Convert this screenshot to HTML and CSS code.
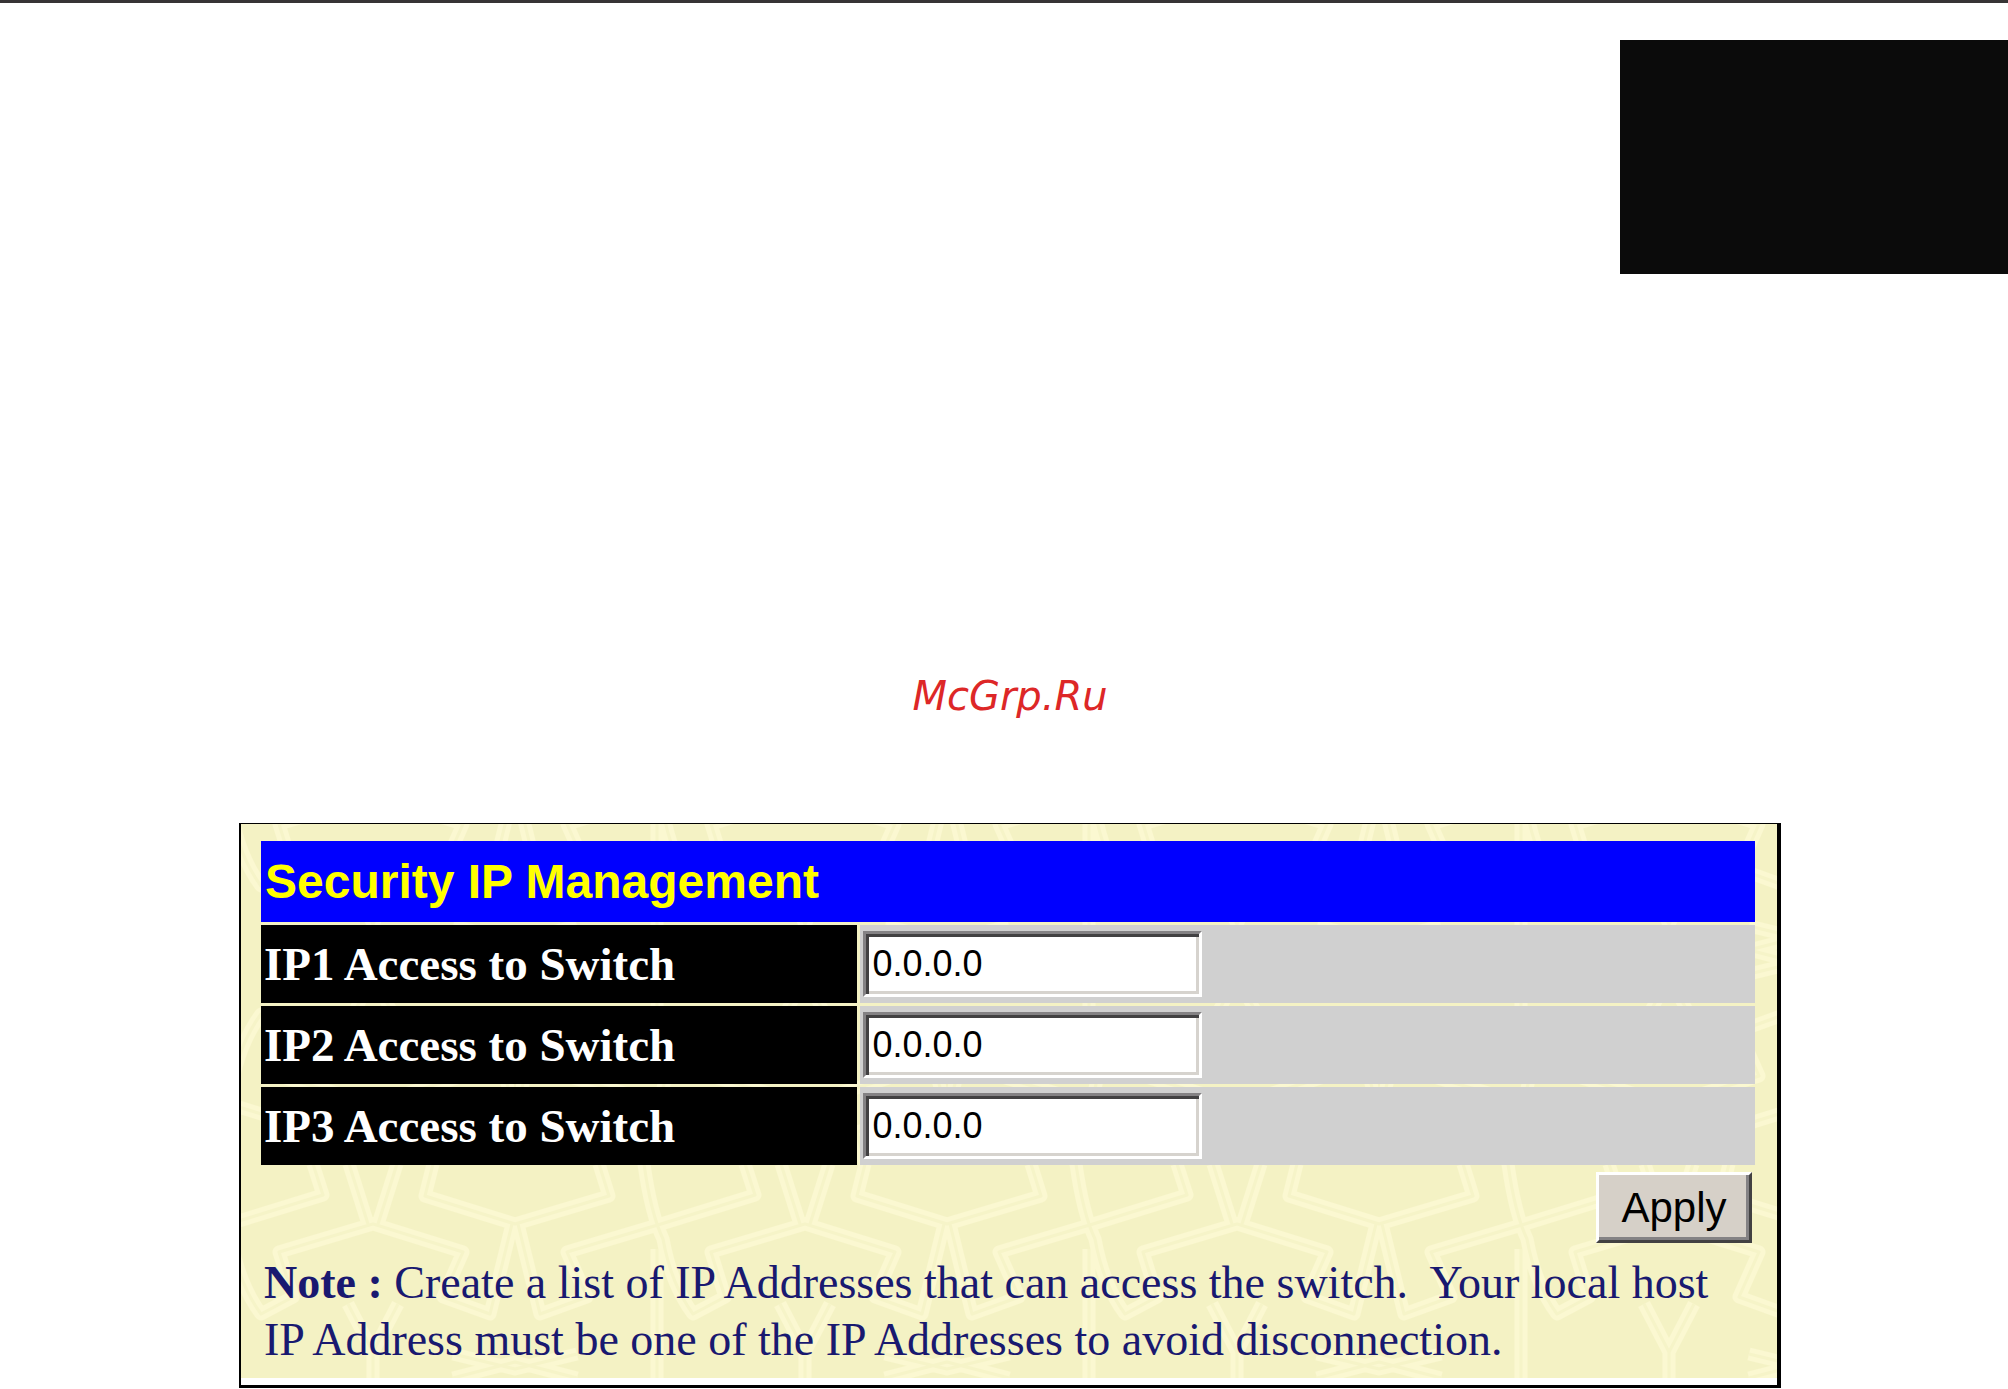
FILE: index.html
```html
<!DOCTYPE html>
<html lang="en">
<head>
  <meta charset="UTF-8">
  <meta name="viewport" content="width=device-width, initial-scale=1.0">
  <title>Security IP Management</title>
  <link rel="stylesheet" href="styles.css">
</head>
<body>
  <header class="page__header">
    <div class="page__tab"></div>
  </header>
  <main class="page__content">
    <p class="site__name">McGrp.Ru</p>
    <form class="panel">
      <div class="panel__body">
        <table class="ip__table">
          <colgroup>
            <col class="ip__col--label">
            <col>
          </colgroup>
          <thead>
            <tr><th class="ip__title" colspan="2">Security IP Management</th></tr>
          </thead>
          <tbody>
            <tr>
              <th class="ip__label"><label for="ip1">IP1 Access to Switch</label></th>
              <td class="ip__value"><input class="ip__input" type="text" id="ip1" value="0.0.0.0"></td>
            </tr>
            <tr>
              <th class="ip__label"><label for="ip2">IP2 Access to Switch</label></th>
              <td class="ip__value"><input class="ip__input" type="text" id="ip2" value="0.0.0.0"></td>
            </tr>
            <tr>
              <th class="ip__label"><label for="ip3">IP3 Access to Switch</label></th>
              <td class="ip__value"><input class="ip__input" type="text" id="ip3" value="0.0.0.0"></td>
            </tr>
          </tbody>
        </table>
        <div class="panel__actions">
          <button class="apply__button" type="submit">Apply</button>
        </div>
        <p class="panel__note"><strong>Note :</strong> Create a list of IP Addresses that can access the switch.&nbsp; Your local host IP Address must be one of the IP Addresses to avoid disconnection.</p>
      </div>
    </form>
  </main>
</body>
</html>
```
FILE: styles.css
```css
* {
  margin: 0;
  padding: 0;
  box-sizing: border-box;
}

body {
  background: #ffffff;
  font-family: "Liberation Serif", "Times New Roman", serif;
}

.page__header {
  border-top: 3px solid #373435;
  padding-top: 37px;
}

.page__tab {
  width: 388px;
  height: 234px;
  margin-left: auto;
  background: #0b0b0b;
}

.page__content {
  padding: 398px 227px 0 239px;
}

.site__name {
  margin-bottom: 103px;
  text-align: center;
  font-family: "DejaVu Sans", Verdana, sans-serif;
  font-size: 40px;
  font-style: italic;
  line-height: 48px;
  color: #dd2727;
}

.panel {
  border: solid #000000;
  border-width: 1px 4px 3px 2px;
  padding-bottom: 7px;
  background: #ffffff;
}

/* woven line pattern, lower half mirrored into the upper half */
.panel__body {
  padding: 14px 19px 10px 17px;
  background-color: #f4f2c4;
  background-image: url("data:image/svg+xml,%3Csvg xmlns='http://www.w3.org/2000/svg' xmlns:xlink='http://www.w3.org/1999/xlink' width='432' height='428' viewBox='0 0 432 428'%3E%3Cdefs%3E%3Cpath id='p' d='M-24 0L-5 60M24 0L5 60M-94 88L0 60L90 88L70 133L117 150L139 60M145 60L167 150L214 133L194 88L288 60L382 31L372 0M60 0L52 32L142 60L236 32L226 0M271 0Q278 50 290 75Q298 120 320 150L352 133L338 88L432 60L522 88M408 0L427 60M456 0L437 60M-25 140L0 188L25 140M0 188V214M407 140L432 188L457 140M432 188V214M80 190L142 205L204 190M80 214L142 198L204 214M284 85V214'/%3E%3Cg id='g' fill='none' stroke-linejoin='round'%3E%3Cuse xlink:href='%23p' stroke='%23fbf8d1' stroke-width='13'/%3E%3Cuse xlink:href='%23p' stroke='%23f6f4c8' stroke-width='3'/%3E%3C/g%3E%3C/defs%3E%3Cuse xlink:href='%23g' y='214'/%3E%3Cuse xlink:href='%23g' transform='translate(0 214) scale(1 -1)'/%3E%3C/svg%3E");
  background-position: 132px 100%;
}

.ip__table {
  width: 100%;
  table-layout: fixed;
  border-spacing: 3px;
  text-align: left;
}

.ip__col--label {
  width: 40%;
}

.ip__title {
  height: 81px;
  padding: 0 4px;
  background: #0000ff;
  color: #ffff00;
  font-family: "Liberation Sans", Arial, sans-serif;
  font-size: 48px;
  line-height: 56px;
}

.ip__label {
  height: 78px;
  padding: 0 3px;
  background: #000000;
  color: #ffffff;
  font-size: 47px;
  line-height: 56px;
}

.ip__value {
  padding: 0 3px;
  background: #d0d0d0;
}

.ip__input {
  display: block;
  width: 339px;
  height: 66px;
  padding: 0 6px;
  border: 3px solid;
  border-color: #848284 #ffffff #ffffff #848284;
  box-shadow: inset 3px 3px 0 #424142, inset -3px -3px 0 #d6d3ce;
  background: #ffffff;
  color: #000000;
  font-family: "Liberation Sans", Arial, sans-serif;
  font-size: 36px;
}

.panel__actions {
  display: flex;
  justify-content: flex-end;
  padding: 4px 6px 0 0;
}

.apply__button {
  width: 156px;
  height: 71px;
  border: 3px solid;
  border-color: #ffffff #424142 #424142 #ffffff;
  box-shadow: inset -3px -3px 0 #848284;
  background: #d6d0c8;
  color: #000000;
  font-family: "Liberation Sans", Arial, sans-serif;
  font-size: 42px;
}

.panel__note {
  padding: 11px 30px 0 6px;
  color: #191970;
  font-size: 46px;
  line-height: 57px;
}
```
